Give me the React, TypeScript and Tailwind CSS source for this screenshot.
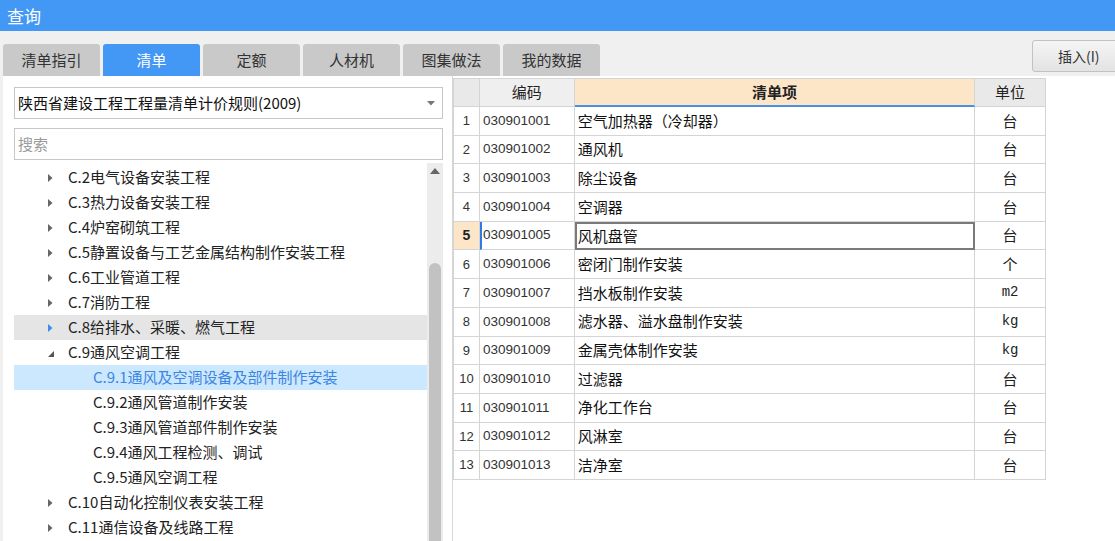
import React from "react";

const tabs = ["清单指引", "清单", "定额", "人材机", "图集做法", "我的数据"];

type TreeItem = { label: string; level: 1 | 2; arrow?: "right" | "down"; state?: "hover" | "selected" };

const tree: TreeItem[] = [
  { label: "C.2电气设备安装工程", level: 1, arrow: "right" },
  { label: "C.3热力设备安装工程", level: 1, arrow: "right" },
  { label: "C.4炉窑砌筑工程", level: 1, arrow: "right" },
  { label: "C.5静置设备与工艺金属结构制作安装工程", level: 1, arrow: "right" },
  { label: "C.6工业管道工程", level: 1, arrow: "right" },
  { label: "C.7消防工程", level: 1, arrow: "right" },
  { label: "C.8给排水、采暖、燃气工程", level: 1, arrow: "right", state: "hover" },
  { label: "C.9通风空调工程", level: 1, arrow: "down" },
  { label: "C.9.1通风及空调设备及部件制作安装", level: 2, state: "selected" },
  { label: "C.9.2通风管道制作安装", level: 2 },
  { label: "C.9.3通风管道部件制作安装", level: 2 },
  { label: "C.9.4通风工程检测、调试", level: 2 },
  { label: "C.9.5通风空调工程", level: 2 },
  { label: "C.10自动化控制仪表安装工程", level: 1, arrow: "right" },
  { label: "C.11通信设备及线路工程", level: 1, arrow: "right" },
];

const rows: [string, string, string][] = [
  ["030901001", "空气加热器（冷却器）", "台"],
  ["030901002", "通风机", "台"],
  ["030901003", "除尘设备", "台"],
  ["030901004", "空调器", "台"],
  ["030901005", "风机盘管", "台"],
  ["030901006", "密闭门制作安装", "个"],
  ["030901007", "挡水板制作安装", "m2"],
  ["030901008", "滤水器、溢水盘制作安装", "kg"],
  ["030901009", "金属壳体制作安装", "kg"],
  ["030901010", "过滤器", "台"],
  ["030901011", "净化工作台", "台"],
  ["030901012", "风淋室", "台"],
  ["030901013", "洁净室", "台"],
];

const cjk = "font-['Microsoft_YaHei','Noto_Sans_CJK_SC',sans-serif]";

function Arrow({ dir, active }: { dir: "right" | "down"; active?: boolean }) {
  if (dir === "down") {
    return (
      <svg width="8" height="8" viewBox="0 0 8 8" className="mt-[2px]">
        <polygon points="7,1 7,7 1,7" fill="#555" />
      </svg>
    );
  }
  return (
    <svg width="6" height="10" viewBox="0 0 6 10">
      <polygon points="1,1 5.5,5 1,9" fill={active ? "#3b8fe8" : "#666"} />
    </svg>
  );
}

export default function App() {
  return (
    <div className={`w-[1115px] h-[541px] overflow-hidden bg-[#f0f0f0] ${cjk} text-[#222]`}>
      <div className="h-[31px] bg-[#4398f6] text-white text-[17px] pl-[7px] flex items-center">查询</div>

      <div className="h-[45px] flex items-end pl-[3px] relative">
        <div className="flex gap-[3px]">
          {tabs.map((t, i) => (
            <div
              key={t}
              className={`w-[97px] h-[32px] rounded-t-[3px] flex items-center justify-center text-[15px] ${
                i === 1 ? "bg-[#4398f6] text-white" : "bg-[#c9c9c9] text-[#333]"
              }`}
            >
              {t}
            </div>
          ))}
        </div>
        <div className="absolute left-[1032px] top-[9px] w-[100px] h-[32px] rounded-[3px] border border-[#c2c2c2] bg-gradient-to-b from-[#f5f5f5] to-[#e3e3e3] flex items-center pl-[25px] text-[14px] text-[#333]">
          插入(I)
        </div>
      </div>

      <div className="h-[465px] ml-[3px] bg-white flex">
        <div className="w-[449px] pt-[11px] pl-[11px] flex flex-col">
          <div className="w-[429px] h-[32px] border border-[#c8c8c8] flex items-center justify-between pl-[3px] pr-[7px] text-[15px] text-[#111]">
            <span>陕西省建设工程工程量清单计价规则(2009)</span>
            <svg width="8" height="5" viewBox="0 0 8 5">
              <polygon points="0,0 8,0 4,4.5" fill="#777" />
            </svg>
          </div>
          <div className="mt-[9px] w-[429px] h-[32px] border border-[#c8c8c8] flex items-center pl-[3px] text-[15px] text-[#9a9a9a]">
            搜索
          </div>
          <div className="mt-[3px] flex flex-1 min-h-0">
            <div className="w-[413px] pt-[2px]">
              {tree.map((it) => (
                <div
                  key={it.label}
                  className={`h-[25px] flex items-center text-[15px] ${
                    it.state === "hover" ? "bg-[#e5e5e5]" : it.state === "selected" ? "bg-[#cce8ff] text-[#3d85df]" : ""
                  }`}
                >
                  {it.level === 1 ? (
                    <>
                      <div className="w-[54px] flex justify-end pr-[1px]">
                        <div className="w-[20px] flex items-center">
                          {it.arrow && <Arrow dir={it.arrow} active={it.state === "hover"} />}
                        </div>
                      </div>
                      <span>{it.label}</span>
                    </>
                  ) : (
                    <span className="pl-[79px]">{it.label}</span>
                  )}
                </div>
              ))}
            </div>
            <div className="w-[16px] bg-[#ececec] flex flex-col items-center">
              <svg width="10" height="6" viewBox="0 0 10 6" className="mt-[5px]">
                <polygon points="0,6 10,6 5,0" fill="#666" />
              </svg>
              <div className="mt-[89px] w-[12px] flex-1 rounded-t-[6px] bg-[#c2c2c2]" />
            </div>
          </div>
        </div>

        <div className="flex-1 border-l border-[#d6d6d6] pt-[2px]">
          <div className="w-[593px] border-t border-l border-[#d4d4d4]">
            <div className="flex h-[28px] text-[15px]">
              <div className="w-[26px] bg-[#e9e9e9] border-r border-b border-[#d4d4d4]" />
              <div className="w-[95px] bg-[#efefef] border-r border-b border-[#d4d4d4] flex items-center justify-center">编码</div>
              <div className="w-[401px] bg-[#fde5c8] border-r border-[#d4d4d4] border-b-2 border-b-[#4a90e2] flex items-center justify-center font-bold">
                清单项
              </div>
              <div className="w-[71px] bg-[#e9e9e9] border-r border-b border-[#d4d4d4] flex items-center justify-center">单位</div>
            </div>
            {rows.map(([code, name, unit], i) => {
              const sel = i === 4;
              const latin = unit === "m2" || unit === "kg";
              return (
                <div key={code} className="flex h-[28.7px]">
                  <div
                    className={`w-[26px] border-r border-b border-[#d4d4d4] flex items-center justify-center font-['Liberation_Sans',sans-serif] ${
                      sel ? "bg-[#fde5c8] font-bold text-[14px]" : "text-[13px] text-[#333]"
                    }`}
                  >
                    {i + 1}
                  </div>
                  <div
                    className={`w-[95px] border-r border-b border-[#d4d4d4] flex items-center font-['Liberation_Sans',sans-serif] text-[13.5px] text-[#333] ${
                      sel ? "border-l-2 border-l-[#2f7ae5] pl-[1px]" : "pl-[3px]"
                    }`}
                  >
                    {code}
                  </div>
                  <div
                    className={`w-[401px] flex items-center text-[15px] text-[#111] ${
                      sel ? "border-2 border-[#7a7a7a] pl-[1px]" : "border-r border-b border-[#d4d4d4] pl-[3px]"
                    }`}
                  >
                    {name}
                  </div>
                  <div
                    className={`w-[71px] border-r border-b border-[#d4d4d4] flex items-center justify-center ${
                      latin ? "font-['Liberation_Mono',monospace] text-[14px]" : "text-[15px]"
                    }`}
                  >
                    {unit}
                  </div>
                </div>
              );
            })}
          </div>
        </div>
      </div>
    </div>
  );
}
